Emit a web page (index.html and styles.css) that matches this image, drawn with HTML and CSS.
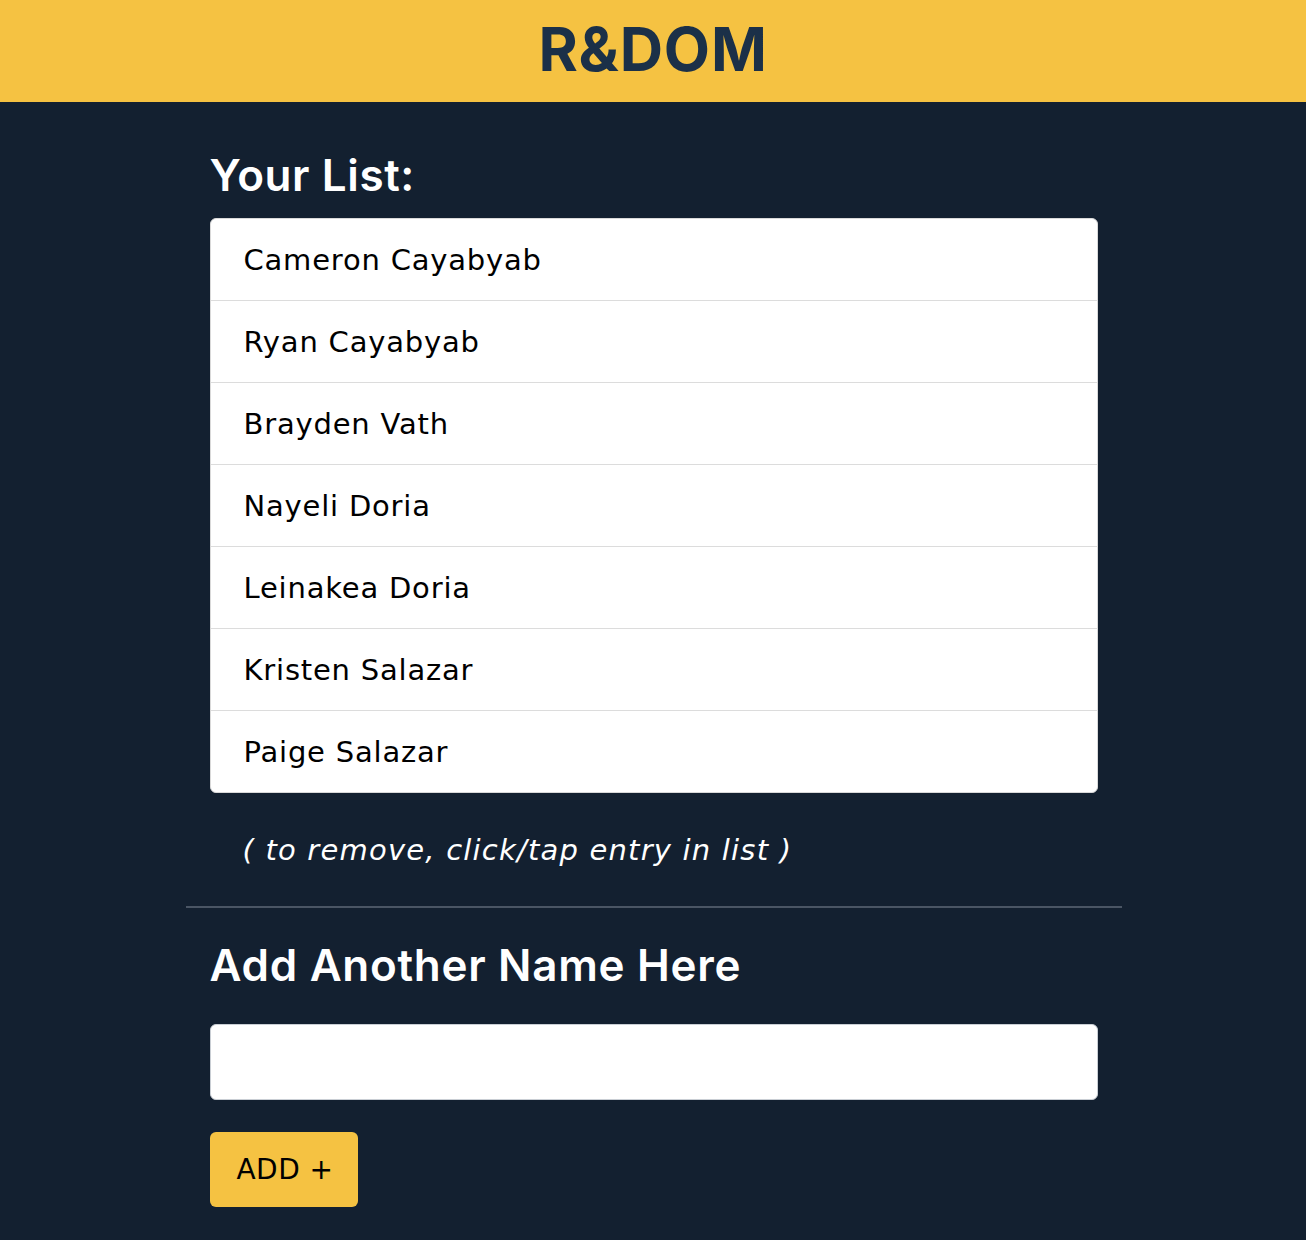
FILE: index.html
```html
<!DOCTYPE html>
<html lang="en">
<head>
<meta charset="utf-8">
<title>R&amp;DOM</title>
<link rel="stylesheet" href="styles.css">
</head>
<body>
<header class="topbar">
  <h1 class="brand">R&amp;DOM</h1>
</header>
<main class="container">
  <section class="list-section">
    <h2 class="heading">Your List:</h2>
    <ul class="name-list">
      <li class="name-item">Cameron Cayabyab</li>
      <li class="name-item">Ryan Cayabyab</li>
      <li class="name-item">Brayden Vath</li>
      <li class="name-item">Nayeli Doria</li>
      <li class="name-item">Leinakea Doria</li>
      <li class="name-item">Kristen Salazar</li>
      <li class="name-item">Paige Salazar</li>
    </ul>
    <p class="hint">( to remove, click/tap entry in list )</p>
  </section>
  <hr class="divider">
  <section class="add-section">
    <h2 class="heading heading-add">Add Another Name Here</h2>
    <input class="name-input" type="text" aria-label="Name">
    <button class="add-btn" type="button">ADD +</button>
  </section>
</main>
</body>
</html>
```

FILE: styles.css
```css
* { box-sizing: border-box; }

html, body {
  margin: 0;
  padding: 0;
}

body {
  background: #132030;
  color: #ffffff;
  font-family: "DejaVu Sans", "Liberation Sans", sans-serif;
  min-height: 1240px;
}

.topbar {
  background: #f5c242;
  height: 102px;
  display: flex;
  align-items: center;
  justify-content: center;
  padding-bottom: 4px;
}

.brand {
  margin: 0;
  font-family: "Inter", "Liberation Sans", sans-serif;
  font-weight: 700;
  font-size: 60px;
  line-height: 1;
  color: #1b3048;
  letter-spacing: 0.8px;
}

.container {
  width: 937px;
  margin: 0 auto;
  padding: 0 0 33px 1px;
}

.list-section,
.add-section {
  padding: 0 24px;
}

.heading {
  margin: 47px 0 16px;
  font-family: "Inter", "Liberation Sans", sans-serif;
  font-weight: 600;
  font-size: 44px;
  line-height: 52.8px;
  color: #ffffff;
  letter-spacing: 0.6px;
}

.heading-add {
  margin: 31px 0 32px;
  letter-spacing: 0.7px;
}

.name-list {
  list-style: none;
  margin: 0;
  padding: 0;
  background: #ffffff;
  border: 1px solid #d9d9d9;
  border-radius: 6px;
  overflow: hidden;
}

.name-item {
  padding: 23px 33px 22px;
  font-size: 29px;
  line-height: 36px;
  letter-spacing: 0.8px;
  color: #000000;
}

.name-item + .name-item {
  border-top: 1px solid #dcdcdc;
}

.hint {
  margin: 39px 0 0;
  padding-left: 33px;
  font-size: 29px;
  line-height: 36px;
  font-style: italic;
  letter-spacing: 1.2px;
  color: #ffffff;
}

.divider {
  margin: 38px 0 0;
  border: 0;
  border-top: 2px solid #4a5564;
  height: 0;
}

.name-input {
  display: block;
  width: 100%;
  height: 76px;
  margin: 0;
  padding: 0 20px;
  background: #ffffff;
  border: 1px solid #c9ced4;
  border-radius: 6px;
  font-family: inherit;
  font-size: 28px;
  outline: none;
}

.add-btn {
  display: block;
  margin-top: 32px;
  width: 148px;
  height: 75px;
  padding: 0 0 0 3px;
  background: #f5c242;
  border: 0;
  border-radius: 6px;
  font-family: "DejaVu Sans", "Liberation Sans", sans-serif;
  font-size: 28px;
  letter-spacing: 0.5px;
  color: #000000;
}
```
